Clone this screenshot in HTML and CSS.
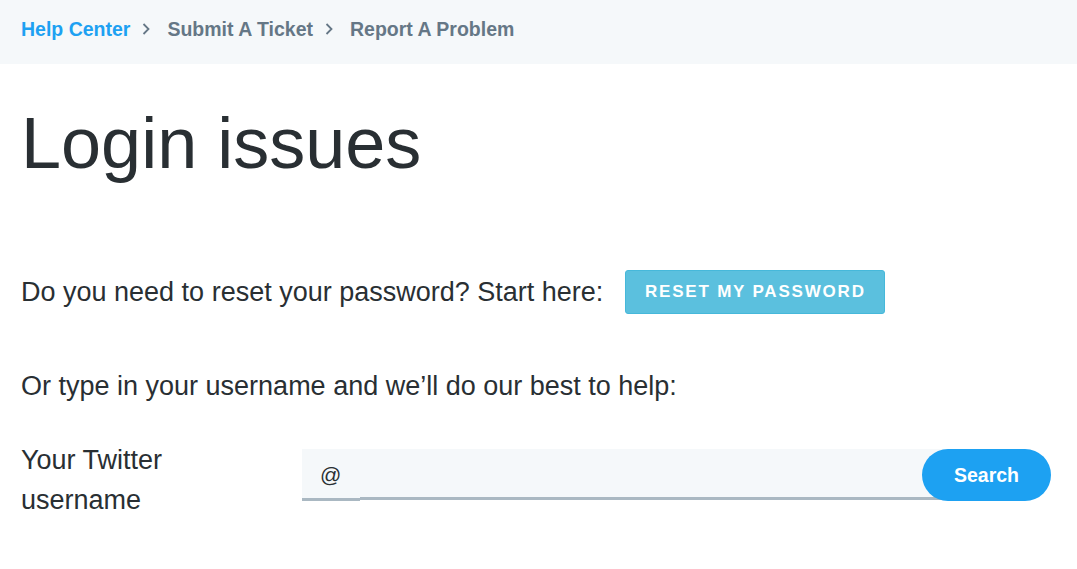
FILE: index.html
```html
<!DOCTYPE html>
<html lang="en">
<head>
  <meta charset="UTF-8" />
  <title>Login issues</title>
  <link rel="stylesheet" href="styles.css">
</head>
<body>

<nav class="crumbs">
  <a class="crumb crumb-home" href="#">Help Center</a>
  <svg class="crumb-sep" width="8" height="14" viewBox="0 0 8 14"><polyline points="1.5,2 6.5,7 1.5,12" /></svg>
  <a class="crumb" href="#">Submit A Ticket</a>
  <svg class="crumb-sep" width="8" height="14" viewBox="0 0 8 14"><polyline points="1.5,2 6.5,7 1.5,12" /></svg>
  <a class="crumb" href="#">Report A Problem</a>
</nav>

<main class="content">
  <h1 class="title">Login issues</h1>

  <div class="reset-row">
    <p class="lead">Do you need to reset your password? Start here:</p>
    <button class="reset-btn">Reset my password</button>
  </div>

  <p class="lead lead-or">Or type in your username and we’ll do our best to help:</p>

  <form class="user-form">
    <label class="user-label" for="username">Your Twitter username</label>
    <div class="user-field">
      <span class="at">@</span>
      <input id="username" class="user-input" type="text" />
      <button type="button" class="search-btn">Search</button>
    </div>
  </form>
</main>

</body>
</html>
```

FILE: styles.css
```css
body {
  margin: 0;
  font-family: "Liberation Sans", Arial, sans-serif;
  color: #292f33;
  background: #fff;
}
.crumbs {
  height: 64px;
  background: #f5f8fa;
  display: flex;
  align-items: center;
  padding: 0 21px;
}
.crumb {
  font-size: 19.5px;
  font-weight: bold;
  color: #657786;
  text-decoration: none;
  margin-top: -6px;
}
.crumb-home {
  color: #1da1f2;
}
.crumb-sep {
  margin: -6px 17px 0 12px;
  fill: none;
  stroke: #657786;
  stroke-width: 1.8;
}
.content {
  padding: 0 21px;
}
.title {
  font-size: 72px;
  font-weight: normal;
  margin: 36px 0 0;
  line-height: 1.2;
}
.reset-row {
  display: flex;
  align-items: center;
  margin-top: 84px;
}
.lead {
  font-size: 27px;
  line-height: 31px;
  margin: 0;
}
.reset-btn {
  margin-left: 22px;
  width: 260px;
  height: 44px;
  background: #5bc0de;
  border: 1px solid #46b8da;
  border-radius: 3px;
  color: #fff;
  font-family: inherit;
  font-weight: bold;
  font-size: 17px;
  letter-spacing: 1.8px;
  text-transform: uppercase;
}
.lead-or {
  margin-top: 57px;
}
.user-form {
  display: flex;
  margin-top: 47px;
}
.user-label {
  font-size: 27px;
  line-height: 40px;
  width: 240px;
  margin-right: 41px;
  margin-top: -9px;
}
.user-field {
  display: flex;
  align-items: flex-start;
}
.at {
  width: 58px;
  height: 52px;
  box-sizing: border-box;
  background: #f5f8fa;
  border-bottom: 3px solid #aab8c2;
  font-size: 21px;
  padding: 14px 0 0 18px;
  color: #292f33;
}
.user-input {
  width: 590px;
  height: 51px;
  box-sizing: border-box;
  border: 0;
  border-bottom: 3px solid #aab8c2;
  background: #f5f8fa;
  outline: none;
  font-family: inherit;
  font-size: 20px;
}
.search-btn {
  margin-left: -28px;
  width: 129px;
  height: 52px;
  border: 0;
  border-radius: 26px;
  background: #1da1f2;
  color: #fff;
  font-family: inherit;
  font-weight: bold;
  font-size: 19.5px;
}
```
